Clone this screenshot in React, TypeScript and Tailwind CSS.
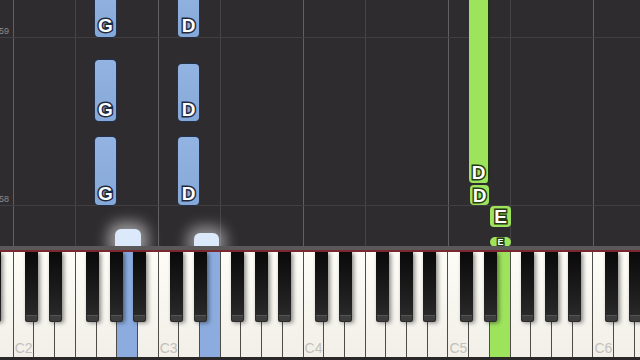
import React from "react";

const W = 145 / 7;
const X0 = -8;
const WHITE_NAMES = ["B", "C", "D", "E", "F", "G", "A"];
const BLACK_OFFSETS = [12.5, 36.5, 73.5, 97.5, 120.5];

const whites = Array.from({ length: 32 }, (_, i) => {
  const name = WHITE_NAMES[i % 7];
  const octave = 2 + Math.floor((i - 1) / 7);
  let hl = "";
  if (i === 6 || i === 10) hl = "blue";
  if (i === 24) hl = "green";
  return { i, label: name === "C" ? `C${octave}` : "", hl };
});

const blacks: number[] = [];
for (let o = -1; o < 5; o++) {
  const base = X0 + (1 + 7 * o) * W;
  BLACK_OFFSETS.forEach((off) => {
    const x = base + off;
    if (x > -14 && x < 640) blacks.push(x);
  });
}

const cLines = [12.5, 157.5, 302.5, 447.5, 592.5];
const fLines = [74.5, 219.5, 364.5, 509.5];

const labelCls =
  "font-['Liberation_Sans',Arial,sans-serif] font-bold text-white leading-none [-webkit-text-stroke:3px_#1f2a3f] [paint-order:stroke_fill]";
const greenLabelCls =
  "font-['Liberation_Sans',Arial,sans-serif] font-bold text-white leading-none [-webkit-text-stroke:3px_#243a12] [paint-order:stroke_fill]";

// a falling note on the roll, placed by pitch (x) and time (top)
const BlueNote = ({ x, top, h, letter }: { x: number; top: number; h: number; letter: string }) => (
  <div
    className="absolute w-[21px] rounded-[4px] bg-gradient-to-b from-[#93b4e2] to-[#86a8d8] ring-1 ring-[#23324a] flex items-end justify-center pb-[2px]"
    style={{ left: x, top, height: h }}
  >
    <span className={`${labelCls} text-[19px]`}>{letter}</span>
  </div>
);

export default function App() {
  return (
    <div className="w-[640px] h-[360px] overflow-hidden flex flex-col bg-[#2f2c30] font-['Liberation_Sans',Arial,sans-serif]">
      {/* note lane */}
      <div className="relative h-[246px] bg-[#2f2c30] overflow-hidden">
        {fLines.map((x) => (
          <div key={x} className="absolute top-0 bottom-0 w-px bg-[#464447]" style={{ left: x }} />
        ))}
        {cLines.map((x) => (
          <div key={x} className="absolute top-0 bottom-0 w-px bg-[#615f62]" style={{ left: x }} />
        ))}
        <div className="absolute left-0 right-0 top-[37px] h-px bg-[#423f43]" />
        <div className="absolute left-0 right-0 top-[205px] h-px bg-[#423f43]" />
        <span className="absolute left-[-1px] top-[27px] text-[9px] text-[#8c8a8d] leading-none">59</span>
        <span className="absolute left-[-1px] top-[195px] text-[9px] text-[#8c8a8d] leading-none">58</span>

        <BlueNote x={95} top={-10} h={47} letter="G" />
        <BlueNote x={95} top={60} h={61} letter="G" />
        <BlueNote x={95} top={137} h={68} letter="G" />
        <BlueNote x={178} top={-10} h={47} letter="D" />
        <BlueNote x={178} top={64} h={57} letter="D" />
        <BlueNote x={178} top={137} h={68} letter="D" />

        {/* green notes */}
        <div className="absolute left-[469px] top-[-10px] w-[21px] h-[193px] rounded-[4px] bg-[#9ee35c] border-r-2 border-[#1d3410] flex items-end justify-center pb-[1px]">
          <span className={`${greenLabelCls} text-[19px]`}>D</span>
        </div>
        <div className="absolute left-[470px] top-[185px] w-[19px] h-[20px] rounded-[4px] bg-[#9ee35c] flex items-center justify-center">
          <span className={`${greenLabelCls} text-[19px]`}>D</span>
        </div>
        <div className="absolute left-[490px] top-[206px] w-[21px] h-[21px] rounded-[4px] bg-[#9ee35c] flex items-center justify-center">
          <span className={`${greenLabelCls} text-[19px]`}>E</span>
        </div>
        <div className="absolute left-[490px] top-[237px] w-[21px] h-[10px] rounded-full bg-[#9ee35c] flex items-center justify-center">
          <span className={`${greenLabelCls} text-[9px] [-webkit-text-stroke:2px_#243a12]`}>E</span>
        </div>

        {/* glowing hits */}
        <div className="absolute left-[115px] top-[229px] w-[26px] h-[18px] rounded-t-[6px] bg-[#dce9fa] shadow-[0_0_14px_7px_rgba(255,255,255,0.5)]" />
        <div className="absolute left-[194px] top-[233px] w-[25px] h-[14px] rounded-t-[6px] bg-[#dce9fa] shadow-[0_0_14px_7px_rgba(255,255,255,0.45)]" />
      </div>

      <div className="h-[4px] bg-[#5b585a]" />
      <div className="h-[2px] bg-[#7c2630]" />

      {/* keyboard */}
      <div className="relative h-[105px] overflow-hidden">
        <div className="flex h-full ml-[-8px]">
          {whites.map((k) => (
            <div
              key={k.i}
              className={`relative w-[20.714px] shrink-0 border-l border-[#4e4c49] flex items-end pl-[1px] pb-[2px] ${
                k.hl === "blue"
                  ? "bg-[#8cace0]"
                  : k.hl === "green"
                  ? "bg-[#9ee35c]"
                  : "bg-gradient-to-b from-[#fdfcf6] to-[#f1efe8]"
              }`}
            >
              {k.label && <span className="text-[14px] leading-none text-[#c2c0bc]">{k.label}</span>}
            </div>
          ))}
        </div>
        {blacks.map((x) => (
          <div
            key={x}
            className="absolute top-0 w-[12.5px] h-[70px] rounded-b-[2px] bg-gradient-to-b from-[#0a0a0a] via-[#1a1a1a] to-[#2c2c2c] shadow-[2px_1px_4px_rgba(0,0,0,0.45)] flex flex-col justify-end"
            style={{ left: x }}
          >
            <div className="h-[6px] mx-[1px] mb-[1px] rounded-b-[2px] bg-[#3d3d3d] border-t border-[#555]" />
          </div>
        ))}
      </div>
      <div className="h-[3px] bg-[#2a2729]" />
    </div>
  );
}
